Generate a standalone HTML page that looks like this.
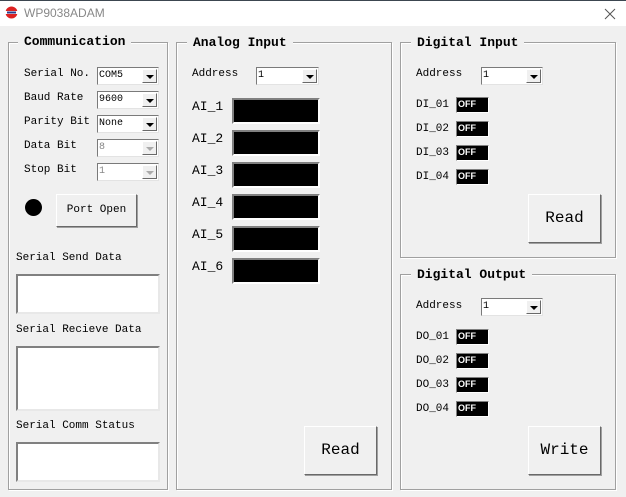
<!DOCTYPE html><html><head><style>
*{margin:0;padding:0;box-sizing:border-box}
body{width:626px;height:497px;background:#f0f0f0;position:relative;overflow:hidden;font-family:"Liberation Mono","Noto Sans CJK SC",monospace;font-size:11px;color:#000}
div,span{position:absolute}
.tb{left:0;top:0;width:626px;height:26px;background:#fff;border-top:1px solid #3c4650}
.g{border:1px solid #a0a0a0;box-shadow:inset 1px 1px 0 #fff,1px 1px 0 #fff}
.gt{background:#f0f0f0;font-weight:bold;font-size:13px;padding:0 6px;line-height:14px}
.l{white-space:nowrap;line-height:12px}
.cb{background:#fff;border:1px solid #7a7a7a;border-right-color:#e3e3e3;border-bottom-color:#e3e3e3;height:18px;font-size:10px;line-height:15px;padding-left:1px}
.cb i{position:absolute;right:1px;top:1px;width:15px;height:14px;background:#f0f0f0;border:1px solid #fff;border-right-color:#696969;border-bottom-color:#696969}
.cb i:after{content:"";position:absolute;left:3px;top:5px;border-left:4px solid transparent;border-right:4px solid transparent;border-top:4px solid #000}
.dis{color:#888}.dis i:after{border-top-color:#aaa}
.bk{background:#000;border:2px solid #808080;border-right-color:#fff;border-bottom-color:#fff}
.off{background:#000;color:#fff;font-size:9px;font-weight:bold;line-height:12px;padding-left:1px;border:1px solid #808080;border-right-color:#fff;border-bottom-color:#fff;font-family:"Liberation Sans",sans-serif}
.tx{background:#fff;border:2px solid #808080;border-right-color:#e8e8e8;border-bottom-color:#e8e8e8}
.bt{background:#f0f0f0;border:1px solid #fff;border-right-color:#696969;border-bottom-color:#696969;box-shadow:1px 1px 0 #a0a0a0;text-align:center}
.big{font-size:13px}
</style></head><body>
<div class="tb">
<svg style="position:absolute;left:5px;top:5px" width="13" height="13" viewBox="0 0 13 13"><circle cx="6.5" cy="6.5" r="6" fill="#d22"/><rect x="0" y="5" width="13" height="3" fill="#fff"/><rect x="2" y="5.5" width="9" height="2" fill="#2a3c8c"/></svg>
<span style="left:24px;top:5px;font-family:'Liberation Sans',sans-serif;font-size:12px;color:#888">WP9038ADAM</span>
<svg style="position:absolute;left:604px;top:7px" width="12" height="12"><path d="M1 1L11 11M11 1L1 11" stroke="#555" stroke-width="1"/></svg>
</div>

<div class="g" style="left:8px;top:42px;width:160px;height:448px"></div>
<span class="gt" style="left:18px;top:35px">Communication</span>
<span class="l" style="left:24px;top:68px">Serial No.</span><div class="cb" style="left:97px;top:67px;width:62px">COM5<i></i></div>
<span class="l" style="left:24px;top:92px">Baud Rate</span><div class="cb" style="left:97px;top:91px;width:62px">9600<i></i></div>
<span class="l" style="left:24px;top:116px">Parity Bit</span><div class="cb" style="left:97px;top:115px;width:62px">None<i></i></div>
<span class="l" style="left:24px;top:140px">Data Bit</span><div class="cb dis" style="left:97px;top:139px;width:62px">8<i></i></div>
<span class="l" style="left:24px;top:164px">Stop Bit</span><div class="cb dis" style="left:97px;top:163px;width:62px">1<i></i></div>
<div style="left:25px;top:199px;width:17px;height:17px;border-radius:50%;background:#000"></div>
<div class="bt" style="left:56px;top:194px;width:81px;height:33px;line-height:31px;font-size:11px">Port Open</div>
<span class="l" style="left:16px;top:252px">Serial Send Data</span>
<div class="tx" style="left:16px;top:274px;width:144px;height:40px"></div>
<span class="l" style="left:16px;top:324px">Serial Recieve Data</span>
<div class="tx" style="left:16px;top:346px;width:144px;height:65px"></div>
<span class="l" style="left:16px;top:420px">Serial Comm Status</span>
<div class="tx" style="left:16px;top:442px;width:144px;height:40px"></div>

<div class="g" style="left:176px;top:42px;width:216px;height:448px"></div>
<span class="gt" style="left:187px;top:36px">Analog Input</span>
<span class="l" style="left:192px;top:68px">Address</span><div class="cb" style="left:256px;top:67px;width:63px">1<i></i></div>
<span class="l big" style="left:192px;top:101px">AI_1</span><div class="bk" style="left:232px;top:98px;width:88px;height:26px"></div>
<span class="l big" style="left:192px;top:133px">AI_2</span><div class="bk" style="left:232px;top:130px;width:88px;height:26px"></div>
<span class="l big" style="left:192px;top:165px">AI_3</span><div class="bk" style="left:232px;top:162px;width:88px;height:26px"></div>
<span class="l big" style="left:192px;top:197px">AI_4</span><div class="bk" style="left:232px;top:194px;width:88px;height:26px"></div>
<span class="l big" style="left:192px;top:229px">AI_5</span><div class="bk" style="left:232px;top:226px;width:88px;height:26px"></div>
<span class="l big" style="left:192px;top:261px">AI_6</span><div class="bk" style="left:232px;top:258px;width:88px;height:26px"></div>
<div class="bt" style="left:304px;top:426px;width:73px;height:49px;line-height:47px;font-size:16px">Read</div>

<div class="g" style="left:400px;top:42px;width:216px;height:216px"></div>
<span class="gt" style="left:411px;top:36px">Digital Input</span>
<span class="l" style="left:416px;top:68px">Address</span><div class="cb" style="left:481px;top:67px;width:62px">1<i></i></div>
<span class="l" style="left:416px;top:99px">DI_01</span><div class="off" style="left:456px;top:97px;width:33px;height:16px">OFF</div>
<span class="l" style="left:416px;top:123px">DI_02</span><div class="off" style="left:456px;top:121px;width:33px;height:16px">OFF</div>
<span class="l" style="left:416px;top:147px">DI_03</span><div class="off" style="left:456px;top:145px;width:33px;height:16px">OFF</div>
<span class="l" style="left:416px;top:171px">DI_04</span><div class="off" style="left:456px;top:169px;width:33px;height:16px">OFF</div>
<div class="bt" style="left:528px;top:194px;width:73px;height:49px;line-height:47px;font-size:16px">Read</div>

<div class="g" style="left:400px;top:274px;width:216px;height:216px"></div>
<span class="gt" style="left:411px;top:268px">Digital Output</span>
<span class="l" style="left:416px;top:300px">Address</span><div class="cb" style="left:481px;top:298px;width:62px">1<i></i></div>
<span class="l" style="left:416px;top:331px">DO_01</span><div class="off" style="left:456px;top:329px;width:33px;height:16px">OFF</div>
<span class="l" style="left:416px;top:355px">DO_02</span><div class="off" style="left:456px;top:353px;width:33px;height:16px">OFF</div>
<span class="l" style="left:416px;top:379px">DO_03</span><div class="off" style="left:456px;top:377px;width:33px;height:16px">OFF</div>
<span class="l" style="left:416px;top:403px">DO_04</span><div class="off" style="left:456px;top:401px;width:33px;height:16px">OFF</div>
<div class="bt" style="left:528px;top:426px;width:73px;height:49px;line-height:47px;font-size:16px">Write</div>
</body></html>
